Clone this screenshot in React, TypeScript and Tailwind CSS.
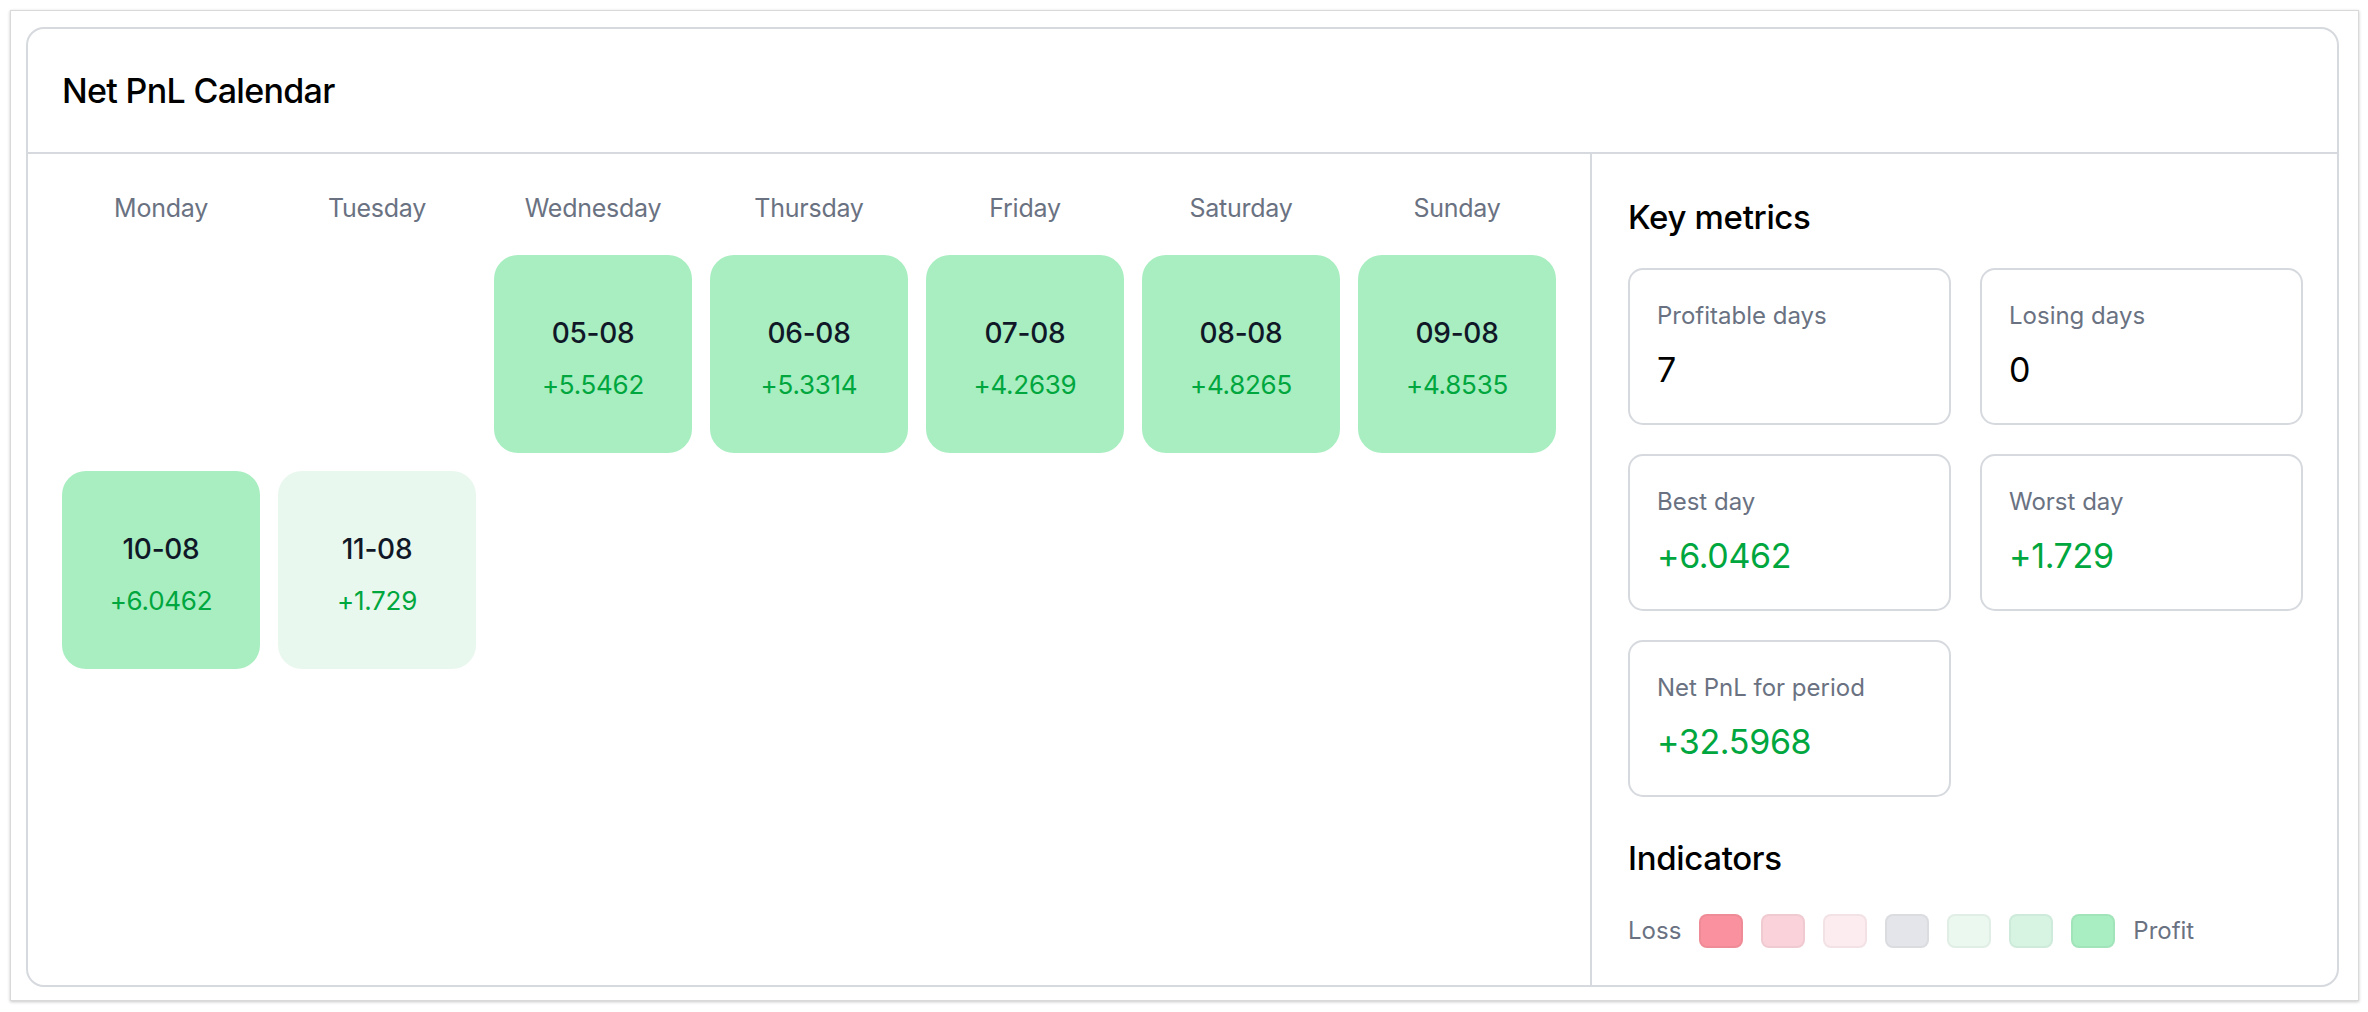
import { clsx } from 'clsx';

type Day = { date: string; pnl: number } | null;

const WEEKDAYS = ['Monday', 'Tuesday', 'Wednesday', 'Thursday', 'Friday', 'Saturday', 'Sunday'];

const DAYS: Day[] = [
  null,
  null,
  { date: '05-08', pnl: 5.5462 },
  { date: '06-08', pnl: 5.3314 },
  { date: '07-08', pnl: 4.2639 },
  { date: '08-08', pnl: 4.8265 },
  { date: '09-08', pnl: 4.8535 },
  { date: '10-08', pnl: 6.0462 },
  { date: '11-08', pnl: 1.729 },
];

const LEGEND = [
  'bg-[#f9919e]',
  'bg-[#fad3da]',
  'bg-[#fdecef]',
  'bg-[#e4e5ea]',
  'bg-[#eaf8ef]',
  'bg-[#d7f4e3]',
  'bg-[#a9eec2]',
];

const fmt = (v: number) => (v >= 0 ? '+' : '') + String(v);

function DayCell({ day }: { day: Day }) {
  if (!day) return <div className="h-[198px]" />;
  const strong = day.pnl >= 3;
  return (
    <div
      className={clsx(
        'h-[198px] pt-[10px] rounded-[24px] flex flex-col items-center justify-center',
        strong ? 'bg-[#a8eec1]' : 'bg-[#e9f8ee]'
      )}
    >
      <span className="text-[28px] leading-[40px] font-medium tracking-[-0.01em] text-[#101828]">{day.date}</span>
      <span className="mt-[12px] text-[26px] leading-[40px] tracking-[-0.01em] text-[#00a63e]">{fmt(day.pnl)}</span>
    </div>
  );
}

function Metric({ label, value, positive }: { label: string; value: string; positive?: boolean }) {
  return (
    <div className="h-[157px] rounded-[15px] border-2 border-[#d6d9de] px-[27px] pt-[28px]">
      <div className="text-[24px] leading-[36px] text-[#6a7282]">{label}</div>
      <div
        className={clsx(
          'mt-[12px] text-[34px] leading-[48px] tracking-[-0.01em]',
          positive ? 'text-[#00a63e]' : 'text-black'
        )}
      >
        {value}
      </div>
    </div>
  );
}

export default function App() {
  return (
    <div className="min-h-[1012px] bg-white pt-[10px] pl-[10px] font-['Inter',sans-serif]">
      <div className="w-[2349px] border border-[#d9d9d9] shadow-[0_1px_3px_rgba(0,0,0,0.22)] pl-[15px] pr-[19px] pt-[16px] pb-[13px]">
        <div className="rounded-[18px] border-2 border-[#d6d9de] flex flex-col">
          <div className="h-[125px] px-[34px] flex items-center border-b-2 border-[#d6d9de]">
            <h2 className="text-[34px] font-medium tracking-[-0.02em] text-black">Net PnL Calendar</h2>
          </div>

          <div className="flex">
            {/* calendar grid */}
            <div className="w-[1564px] shrink-0 border-r-2 border-[#d6d9de] px-[34px] pt-[34px]">
              <div className="grid grid-cols-7 gap-x-[18px] mb-[27px]">
                {WEEKDAYS.map((w) => (
                  <div key={w} className="text-center text-[25px] leading-[40px] tracking-[-0.01em] text-[#6a7282]">
                    {w}
                  </div>
                ))}
              </div>
              <div className="grid grid-cols-7 gap-[18px]">
                {DAYS.map((d, i) => (
                  <DayCell key={i} day={d} />
                ))}
              </div>
            </div>

            {/* metrics side panel */}
            <div className="flex-1 pl-[36px] pr-[34px] pt-[35px] pb-[37px]">
              <h3 className="text-[33px] leading-[56px] font-medium tracking-[-0.01em] text-black">Key metrics</h3>
              <div className="mt-[23px] grid grid-cols-2 gap-[29px]">
                <Metric label="Profitable days" value="7" />
                <Metric label="Losing days" value="0" />
                <Metric label="Best day" value="+6.0462" positive />
                <Metric label="Worst day" value="+1.729" positive />
                <Metric label="Net PnL for period" value="+32.5968" positive />
              </div>

              <h3 className="mt-[33px] text-[33px] leading-[56px] font-medium tracking-[-0.01em] text-black">
                Indicators
              </h3>
              <div className="mt-[28px] flex items-center gap-[18px]">
                <span className="text-[24px] leading-[34px] text-[#6a7282]">Loss</span>
                {LEGEND.map((c) => (
                  <span key={c} className={clsx('w-[44px] h-[34px] rounded-[8px] border-2 border-black/[0.04]', c)} />
                ))}
                <span className="text-[24px] leading-[34px] text-[#6a7282]">Profit</span>
              </div>
            </div>
          </div>
        </div>
      </div>
    </div>
  );
}
